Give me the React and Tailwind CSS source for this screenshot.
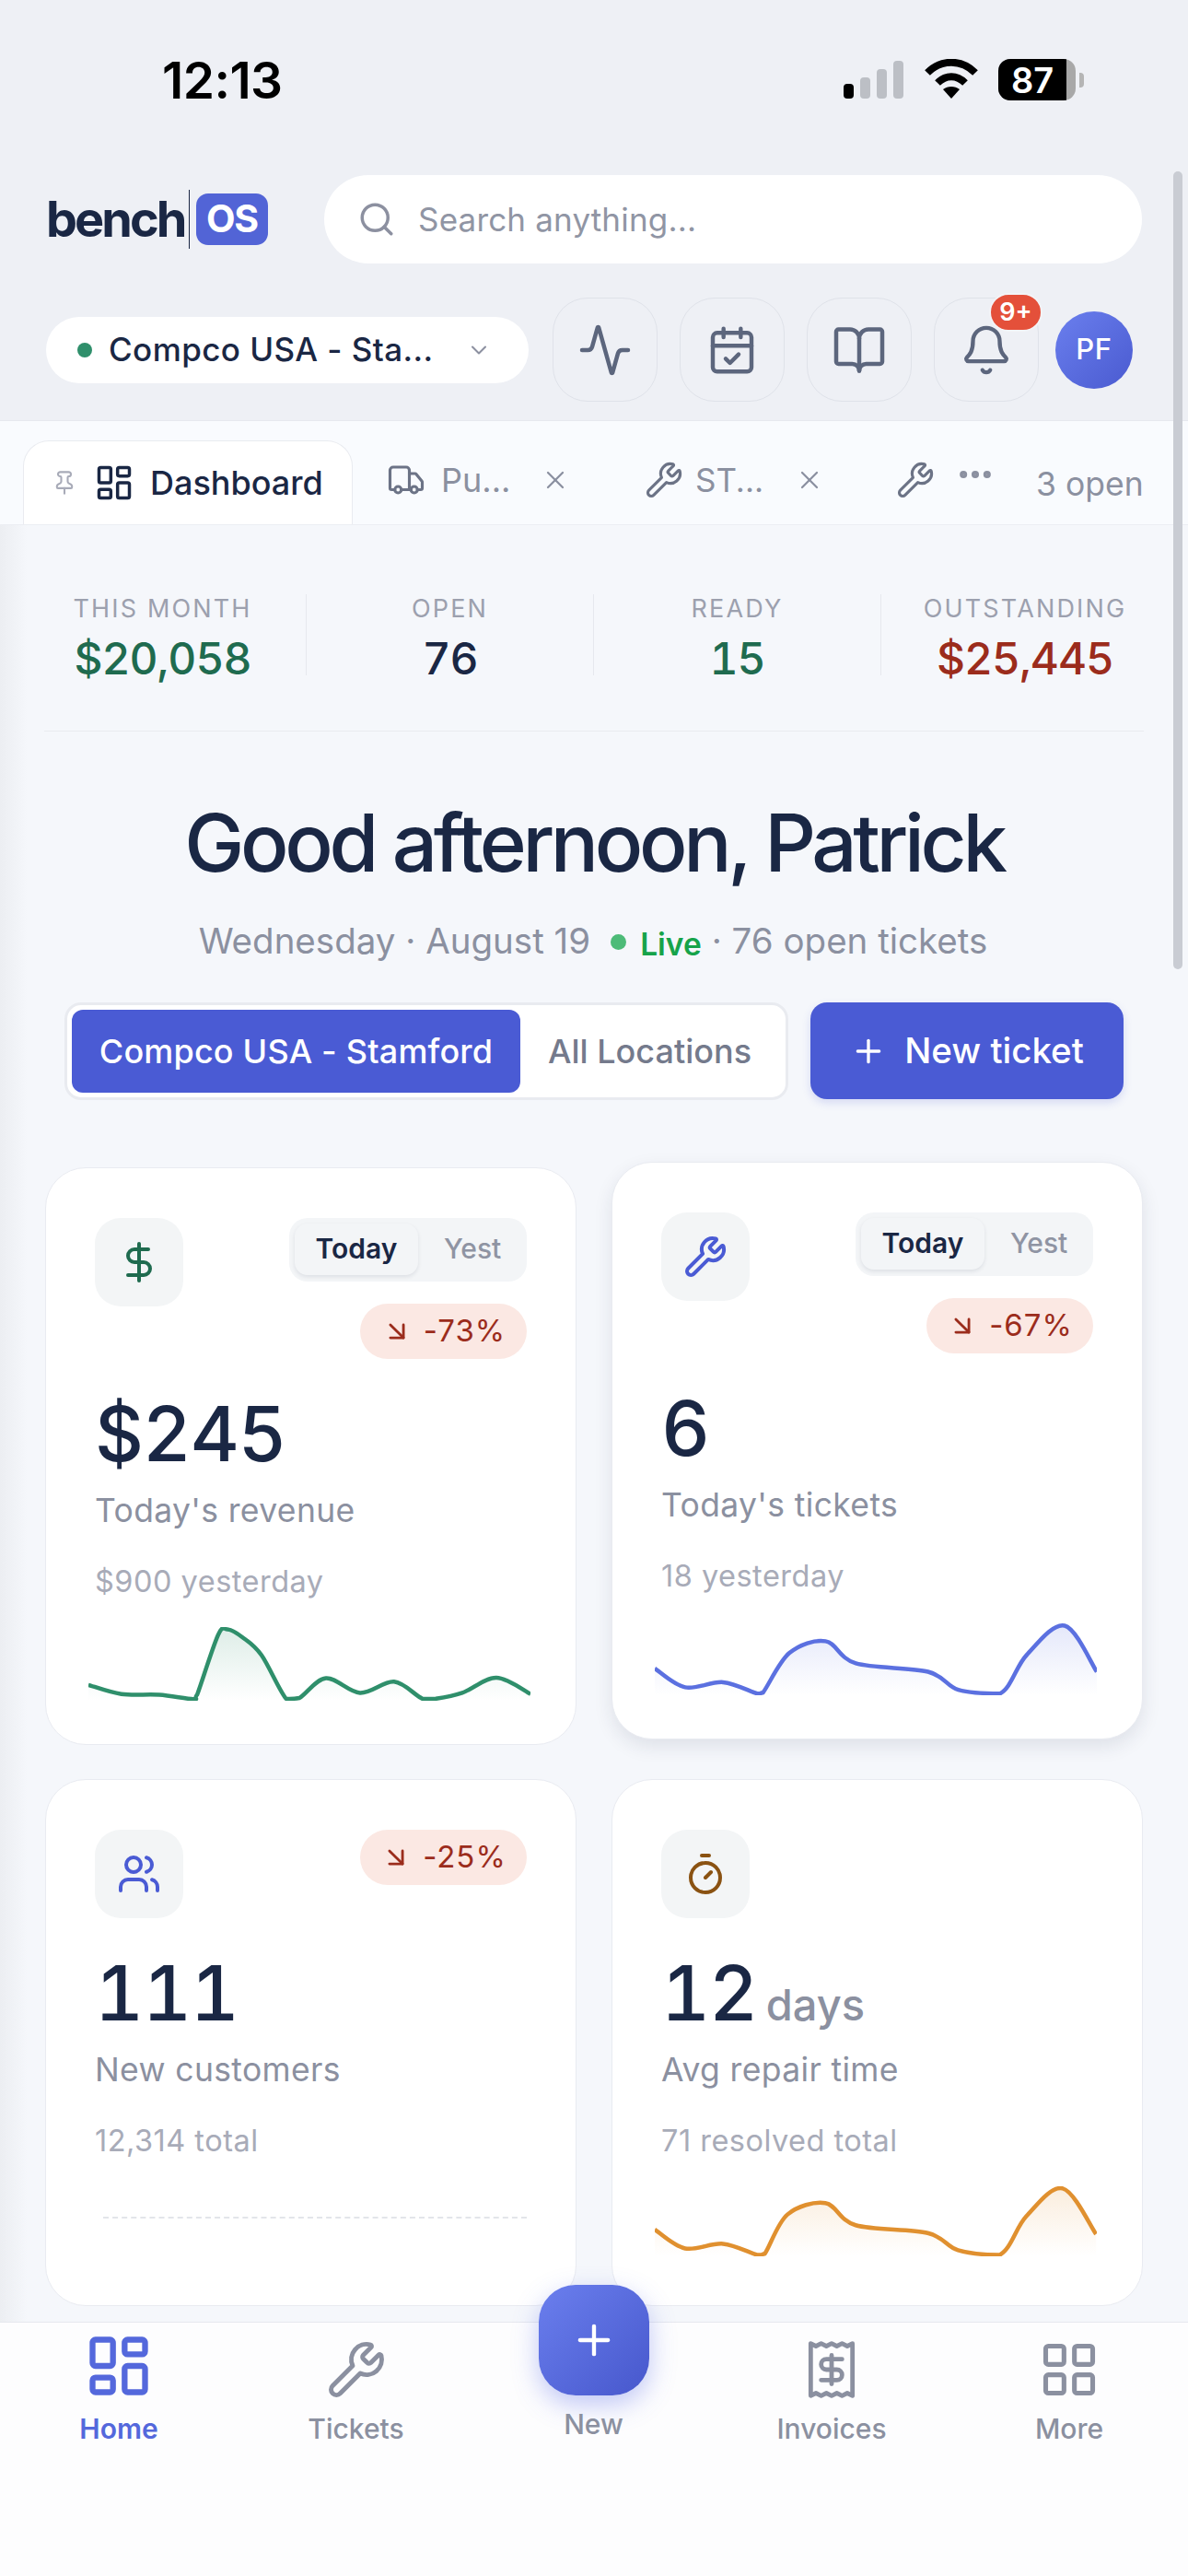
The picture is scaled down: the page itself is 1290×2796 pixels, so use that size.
import {
  Search, ChevronDown, Activity, CalendarCheck, BookOpen, Bell, Pin, LayoutDashboard, Truck, X, Wrench,
  Ellipsis, Plus, DollarSign, Users, Timer, ArrowDownRight, Receipt, LayoutGrid,
} from "lucide-react";

function smooth(pts) {
  const maxY = Math.max(...pts.map((p) => p[1]));
  let d = `M${pts[0][0]} ${pts[0][1]}`;
  for (let i = 0; i < pts.length - 1; i++) {
    const p0 = pts[i - 1] || pts[i];
    const p1 = pts[i];
    const p2 = pts[i + 1];
    const p3 = pts[i + 2] || p2;
    const c1x = p1[0] + (p2[0] - p0[0]) / 6;
    const c1y = Math.min(maxY, p1[1] + (p2[1] - p0[1]) / 6);
    const c2x = p2[0] - (p3[0] - p1[0]) / 6;
    const c2y = Math.min(maxY, p2[1] - (p3[1] - p1[1]) / 6);
    d += ` C${c1x} ${c1y} ${c2x} ${c2y} ${p2[0]} ${p2[1]}`;
  }
  return d;
}

function Spark({ id, pts, box, color, className }) {
  const line = smooth(pts);
  const [x, y, w, h] = box;
  const area = `${line} L${pts[pts.length - 1][0]} ${y + h} L${pts[0][0]} ${y + h} Z`;
  return (
    <svg viewBox={box.join(" ")} preserveAspectRatio="none" className={className}>
      <defs>
        <linearGradient id={id} x1="0" y1="0" x2="0" y2="1">
          <stop offset="0" stopColor={color} stopOpacity="0.16" />
          <stop offset="1" stopColor={color} stopOpacity="0" />
        </linearGradient>
      </defs>
      <path d={area} fill={`url(#${id})`} />
      <path d={line} fill="none" stroke={color} strokeWidth="4.5" vectorEffect="non-scaling-stroke" strokeLinejoin="round" />
    </svg>
  );
}

function StatusBar() {
  return (
    <div className="h-[190px] flex justify-between pl-[176px] pr-[113px] pt-[58px]">
      <span className="text-[55px] leading-[58px] font-semibold tracking-[-0.01em] text-black">12:13</span>
      <div className="flex items-start gap-[21px] pt-[6px]">
        <svg viewBox="0 0 66 44" className="w-[66px] h-[44px]">
          <rect x="0" y="27" width="11" height="16" rx="4" fill="#000" />
          <rect x="18" y="20" width="11" height="23" rx="4" fill="#bcbfc5" />
          <rect x="36" y="11" width="11" height="32" rx="4" fill="#bcbfc5" />
          <rect x="54" y="2" width="11" height="41" rx="4" fill="#bcbfc5" />
        </svg>
        <svg viewBox="0 0 60 44" className="w-[60px] h-[44px]" fill="none" stroke="#000" strokeWidth="8">
          <path d="M4 15 C19 0 41 0 56 15" />
          <path d="M15 26 C24 17 36 17 45 26" />
          <path d="M30 43 L21 33 C26 29 34 29 39 33 Z" fill="#000" stroke="none" />
        </svg>
        <div className="flex items-center">
          <div className="w-[84px] h-[45px] rounded-[13px] bg-[#a8a8a8] overflow-hidden">
            <div className="w-[74px] h-full bg-black flex items-center justify-center text-white text-[38px] leading-none font-semibold">87</div>
          </div>
          <div className="w-[5px] h-[16px] ml-[4px] rounded-r-[4px] bg-[#b5b5b5]" />
        </div>
      </div>
    </div>
  );
}

function Header() {
  const btn = "w-[114px] h-[113px] rounded-[38px] border border-[#dfe2e9] flex items-center justify-center text-[#5c667d]";
  return (
    <header className="h-[457px] bg-[#eef0f5] border-b border-[#e6e8ee]">
      <StatusBar />
      <div className="flex items-center pl-[50px] h-[96px]">
        <span className="w-[150px] text-[54px] leading-none font-bold tracking-[-0.055em] text-[#1a2744]">bench</span>
        <span className="ml-[5px] w-px h-[64px] bg-[#1a2744]" />
        <span className="ml-[7px] w-[78px] h-[56px] rounded-[13px] bg-[#5264d6] text-white text-[41px] font-bold tracking-[-0.03em] flex items-center justify-center">OS</span>
        <div className="ml-[61px] w-[888px] h-[96px] rounded-full bg-white flex items-center pl-[36px]">
          <Search className="w-[42px] h-[42px] text-[#8c90a0]" strokeWidth={2} />
          <span className="ml-[24px] text-[35px] text-[#9095a4] tracking-[0.005em]">Search anything...</span>
        </div>
      </div>
      <div className="flex items-center pl-[50px] mt-[37px] h-[113px]">
        <div className="w-[524px] h-[72px] rounded-full bg-white flex items-center pl-[34px]">
          <span className="w-[16px] h-[16px] rounded-full bg-[#2f8f6b]" />
          <span className="ml-[18px] text-[35px] font-medium text-[#1a2744] tracking-[0.012em]">Compco USA - Sta...</span>
          <ChevronDown className="ml-[35px] w-[28px] h-[28px] text-[#8c90a0]" strokeWidth={1.75} />
        </div>
        <div className="ml-[26px] flex gap-[24px]">
          <div className={btn}><Activity className="w-[60px] h-[60px]" strokeWidth={1.8} /></div>
          <div className={btn}><CalendarCheck className="w-[56px] h-[56px]" strokeWidth={1.9} /></div>
          <div className={btn}><BookOpen className="w-[60px] h-[60px]" strokeWidth={1.8} /></div>
          <div className={`${btn} relative`}>
            <Bell className="w-[58px] h-[58px]" strokeWidth={1.8} />
            <span className="absolute -top-[6px] -right-[5px] w-[58px] h-[42px] rounded-full bg-[#e4503a] border-2 border-[#f3f4f7] text-white text-[27px] font-semibold flex items-center justify-center">9+</span>
          </div>
        </div>
        <div className="ml-[18px] w-[84px] h-[84px] rounded-full bg-gradient-to-br from-[#6b7fee] to-[#4a5ad0] text-white text-[31px] font-medium flex items-center justify-center tracking-[0.02em]">PF</div>
      </div>
    </header>
  );
}

function Tabs() {
  return (
    <div className="h-[113px] bg-[#f9fbfe] border-b border-[#eceef3] flex items-end pl-[25px] text-[#8b90a0] relative">
      <div className="w-[358px] h-[91px] rounded-t-[28px] bg-white border border-b-0 border-[#e9ebf0] flex items-center pl-[30px]">
        <Pin className="w-[28px] h-[28px] text-[#a8abb8]" strokeWidth={1.8} />
        <LayoutDashboard className="ml-[18px] w-[44px] h-[44px] text-[#1a2744]" strokeWidth={1.9} />
        <span className="ml-[17px] text-[36px] font-medium text-[#1a2744]">Dashboard</span>
      </div>
      <div className="flex items-center h-[100px] self-start mt-[14px]">
        <Truck className="ml-[37px] w-[42px] h-[42px] text-[#6c7386]" strokeWidth={1.8} />
        <span className="ml-[17px] w-[72px] text-[36px] text-[#8b90a0]">Pu...</span>
        <X className="ml-[36px] w-[32px] h-[32px]" strokeWidth={1.7} />
        <Wrench className="ml-[81px] w-[42px] h-[42px] text-[#6c7386]" strokeWidth={1.8} />
        <span className="ml-[13px] w-[72px] text-[35px] text-[#8b90a0]">ST...</span>
        <X className="ml-[36px] w-[32px] h-[32px]" strokeWidth={1.7} />
        <Wrench className="ml-[78px] w-[42px] h-[42px] text-[#6c7386]" strokeWidth={1.8} />
        <Ellipsis className="ml-[22px] -mt-[12px] w-[44px] h-[44px] text-[#8b90a0]" strokeWidth={2.4} />
      </div>
      <span className="ml-[44px] self-start mt-[47px] text-[35.5px] leading-[44px] text-[#8b90a0]">3 open</span>
    </div>
  );
}

const stats = [
  ["This month", "$20,058", "text-[#1f6b4f]"],
  ["Open", "76", "text-[#1a2744]"],
  ["Ready", "15", "text-[#1f6b4f]"],
  ["Outstanding", "$25,445", "text-[#9b2c1c]"],
];

function Stats() {
  return (
    <div className="pt-[75px]">
      <div className="grid grid-cols-4 pl-[21px] pr-[21px]">
        {stats.map(([label, value, color], i) => (
          <div key={label} className={`h-[88px] flex flex-col items-center ${i < 3 ? "border-r border-[#e6e8ee]" : ""}`}>
            <span className="text-[27px] leading-[32px] uppercase tracking-[0.08em] text-[#9ca0ae] whitespace-nowrap">{label}</span>
            <span className={`mt-[8px] text-[48px] leading-[60px] font-medium tabular-nums tracking-[-0.022em] ${color}`}>{value}</span>
          </div>
        ))}
      </div>
      <div className="mx-[48px] mt-[60px] h-px bg-[#e9ebf0]" />
    </div>
  );
}

function Greeting() {
  return (
    <div className="flex flex-col items-center">
      <h1 className="mt-[65px] text-[87px] leading-[112px] font-medium tracking-[-0.05em] text-[#1a2744]">Good afternoon, Patrick</h1>
      <div className="mt-[26px] h-[50px] flex items-center text-[38.5px] text-[#8b90a0]">
        <span className="-ml-[2px]">Wednesday · August 19</span>
        <span className="ml-[22px] w-[17px] h-[17px] rounded-full bg-[#4dbb78]" />
        <span className="ml-[15px] mt-[6px] text-[33.5px] font-semibold text-[#16a34a]">Live</span>
        <span className="ml-[11px]">· 76 open tickets</span>
      </div>
      <div className="mt-[41px] w-full pl-[70px] pr-[70px] flex">
        <div className="w-[786px] h-[106px] rounded-[18px] bg-white border-[3px] border-[#e9ebf0] flex items-center pl-[5px]">
          <div className="w-[487px] h-[90px] rounded-[12px] bg-[#4a5bd4] text-white text-[36px] font-medium tracking-[0.005em] flex items-center justify-center">Compco USA - Stamford</div>
          <span className="ml-[30px] text-[36px] font-medium text-[#747a8c]">All Locations</span>
        </div>
        <div className="ml-[24px] w-[340px] h-[105px] rounded-[18px] bg-[#4a5bd4] shadow-[0_4px_10px_rgba(74,91,212,0.18)] text-white text-[38.5px] font-medium flex items-center justify-center">
          <Plus className="w-[40px] h-[40px]" strokeWidth={2} />
          <span className="ml-[19px]">New ticket</span>
        </div>
      </div>
    </div>
  );
}

function Toggle() {
  return (
    <div className="w-[258px] h-[69px] rounded-[20px] bg-[#f3f5f7] flex items-center pl-[6px] pb-[2px]">
      <div className="w-[134px] h-[56px] rounded-[14px] bg-[#f3f5f7] shadow-[0_2px_4px_rgba(30,40,70,0.10)] text-[30px] font-semibold text-[#1a2744] flex items-center justify-center">Today</div>
      <span className="ml-[28px] text-[30px] font-medium text-[#8f94a3]">Yest</span>
    </div>
  );
}

function Trend({ value }) {
  return (
    <div className="w-[181px] h-[60px] rounded-full bg-[#fbe8e3] flex items-center justify-center text-[#9b2c1c] text-[33px] tracking-[0.03em]">
      <ArrowDownRight className="w-[34px] h-[34px]" strokeWidth={2} />
      <span className="ml-[12px]">{value}</span>
    </div>
  );
}

function KpiCard({ icon, toggle, trend, value, unit, label, sub, children, className }) {
  return (
    <div className={`rounded-[44px] bg-white border border-[#e9ebf1] px-[53px] pt-[54px] ${className}`}>
      <div className="flex justify-between items-start">
        <div className="w-[96px] h-[96px] rounded-[28px] bg-[#f3f5f6] flex items-center justify-center">{icon}</div>
        <div className="flex flex-col items-end gap-[24px]">
          {toggle && <Toggle />}
          {trend && <Trend value={trend} />}
        </div>
      </div>
      <div className="mt-[32px] h-[100px] flex items-baseline leading-[100px] text-[#1a2744]">
        <span className="text-[82px] font-medium tabular-nums tracking-[-0.015em]">{value}</span>
        {unit && <span className="ml-[10px] text-[47px] font-medium text-[#8b90a0]">{unit}</span>}
      </div>
      <p className="mt-[11px] text-[35.5px] leading-[44px] text-[#8b90a0] tracking-[0.01em]">{label}</p>
      <p className="mt-[35px] text-[32.5px] leading-[40px] text-[#a8abb8] tracking-[0.015em]">{sub}</p>
      {children}
    </div>
  );
}

function Cards() {
  return (
    <div className="mt-[73px] px-[49px] grid grid-cols-2 gap-x-[38px] gap-y-[37px]">
      <KpiCard
        className="h-[627px]"
        icon={<DollarSign className="w-[48px] h-[48px] text-[#1f6b4f]" strokeWidth={2} />}
        toggle
        trend="-73%"
        value="$245"
        label="Today's revenue"
        sub="$900 yesterday"
      >
        <Spark
          id="g1"
          className="mt-[29px] -ml-[7px] w-[480px] h-[80px] overflow-hidden"
          color="#2f8f6b"
          box={[233, 1204, 1167, 186]}
          pts={[[233,1350],[320,1373],[420,1375],[510,1386],[520,1375],[575,1225],[600,1210],[640,1230],[690,1275],[755,1385],[790,1383],[860,1333],[950,1370],[1040,1342],[1115,1385],[1150,1385],[1220,1370],[1310,1332],[1400,1373]]}
        />
      </KpiCard>
      <KpiCard
        className="h-[627px] -translate-y-[6px] shadow-[0_8px_20px_rgba(30,40,70,0.10)]"
        icon={<Wrench className="w-[48px] h-[48px] text-[#4a5bd4]" strokeWidth={2} />}
        toggle
        trend="-67%"
        value="6"
        label="Today's tickets"
        sub="18 yesterday"
      >
        <Spark
          id="g2"
          className="mt-[29px] -ml-[7px] w-[480px] h-[80px] overflow-hidden"
          color="#5b70e0"
          box={[160, 1195, 1165, 176]}
          pts={[[160,1307],[240,1352],[340,1340],[430,1367],[445,1365],[515,1270],[610,1242],[690,1295],[880,1315],[960,1358],[1070,1367],[1140,1275],[1240,1205],[1325,1315]]}
        />
      </KpiCard>
      <KpiCard
        className="h-[572px]"
        icon={<Users className="w-[48px] h-[48px] text-[#4a5bd4]" strokeWidth={2} />}
        trend="-25%"
        value="111"
        label="New customers"
        sub="12,314 total"
      >
        <div className="mt-[62px] ml-[9px] w-[460px] border-t-2 border-dashed border-[#e3e5ea]" />
      </KpiCard>
      <KpiCard
        className="h-[572px]"
        icon={<Timer className="w-[48px] h-[48px] text-[#8a5212]" strokeWidth={2} />}
        value="12"
        unit="days"
        label="Avg repair time"
        sub="71 resolved total"
      >
        <Spark
          id="g3"
          className="mt-[29px] -ml-[7px] w-[480px] h-[76px] overflow-hidden"
          color="#e0902f"
          box={[865, 1186, 583, 196]}
          pts={[[865,1307],[905,1360],[955,1347],[1000,1378],[1010,1375],[1040,1265],[1090,1233],[1130,1295],[1225,1317],[1265,1365],[1320,1378],[1355,1270],[1403,1192],[1447,1320]]}
        />
      </KpiCard>
    </div>
  );
}

function NavItem({ icon, label, active }) {
  return (
    <div className={`flex flex-col items-center ${active ? "text-[#5468dc]" : "text-[#8b90a0]"}`}>
      <div className={`h-[80px] flex items-center justify-center ${active ? "-translate-y-[4px]" : ""}`}>{icon}</div>
      <span className={`mt-[4px] text-[30px] leading-[40px] ${active ? "font-semibold" : "font-medium"}`}>{label}</span>
    </div>
  );
}

function BottomNav() {
  return (
    <nav className="flex-1 bg-[#fdfdfe] border-t border-[#e6e8ee] grid grid-cols-[258px_257px_259px_258px_258px] pt-[11px]">
      <NavItem active label="Home" icon={<LayoutDashboard className="w-[76px] h-[76px]" strokeWidth={2} />} />
      <NavItem label="Tickets" icon={<Wrench className="w-[66px] h-[66px]" strokeWidth={1.8} />} />
      <div className="flex flex-col items-center">
        <div className="-mt-[52px] w-[120px] h-[120px] rounded-[40px] bg-gradient-to-br from-[#6b7fee] to-[#4757cc] shadow-[0_10px_28px_rgba(80,100,230,0.35)] flex items-center justify-center text-white">
          <Plus className="w-[52px] h-[52px]" strokeWidth={2} />
        </div>
        <span className="mt-[11px] text-[30px] leading-[40px] font-medium text-[#8b90a0]">New</span>
      </div>
      <NavItem label="Invoices" icon={<Receipt className="w-[68px] h-[68px]" strokeWidth={1.7} />} />
      <NavItem label="More" icon={<LayoutGrid className="w-[68px] h-[68px]" strokeWidth={1.8} />} />
    </nav>
  );
}

export default function App() {
  return (
    <div className="relative w-[1290px] h-[2796px] overflow-hidden flex flex-col bg-[#f5f7fb] font-['Inter',sans-serif]">
      <Header />
      <Tabs />
      <main className="h-[1950px] shrink-0 overflow-hidden">
        <Stats />
        <Greeting />
        <Cards />
      </main>
      <BottomNav />
      {/* faint edge shading and scrollbar sit over the page */}
      <div className="absolute top-[570px] left-0 w-[30px] h-[1950px] bg-gradient-to-r from-[#eceef2] to-transparent" />
      <div className="absolute top-[186px] right-[6px] w-[10px] h-[866px] rounded-full bg-[#c9ccd3]" />
    </div>
  );
}
